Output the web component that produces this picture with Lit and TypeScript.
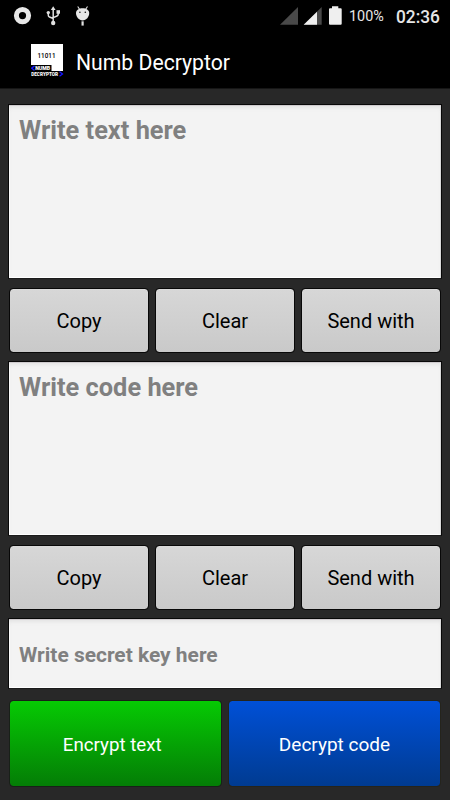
import { LitElement, html, css, svg } from "lit";
import { customElement, property } from "lit/decorators.js";

@customElement("status-bar")
class StatusBar extends LitElement {
  static styles = css`
    :host { display: flex; height: 35px; background: #000; color: #e6e6e6; }
    .icons { display: block; width: 110px; height: 35px; flex: none; }
    .signal { display: block; width: 74px; height: 35px; margin-left: 160px; flex: none; }
    .percent { font-size: 15px; line-height: 33px; width: 51.5px; padding-left: 5px; box-sizing: border-box; white-space: nowrap; }
    .percent span, .clock span { display: block; transform-origin: 0 50%; }
    .percent span { transform: scaleX(0.96); }
    .clock { font-size: 18px; line-height: 33px; font-weight: 500; white-space: nowrap; }
    .clock span { transform: scaleX(0.96); }
  `;
  render() {
    return html`
      <svg class="icons" viewBox="0 0 110 35">
        <circle cx="22.5" cy="15.6" r="6.1" fill="none" stroke="#e8e8e8" stroke-width="5" />
        <g fill="none" stroke="#e0e0e0" stroke-width="1.5">
          <path d="M53.2 9.5V22M48.3 13v2.200q0 1.300 1.200 1.800l3.700 1.500M58.200 12.500v1.800q0 1.200-1.200 1.700l-3.800 1.600" />
        </g>
        <g fill="#e0e0e0">
          <path d="M53.2 6.300l2.400 3.600h-4.800z" />
          <circle cx="53.200" cy="23" r="2.200" />
          <circle cx="48.300" cy="12.600" r="1.700" />
          <path d="M56.500 10.200H60v3.500h-3.500z" />
        </g>
        <path d="M77.700 6.500l2 3M87.500 6.500l-2 3" stroke="#e0e0e0" stroke-width="1.100" />
        <path d="M76 13C76 10 79 8.300 82.600 8.300S89.200 10 89.200 13C89.200 17 86.300 20.400 82.600 20.400S76 17 76 13Z" fill="#e6e6e6" />
        <path d="M81.500 21.300h2.200v4.300h-2.200z" fill="#e0e0e0" />
        <circle cx="79.900" cy="12.300" r=".8" fill="#111" />
        <circle cx="85.300" cy="12.300" r=".8" fill="#111" />
      </svg>
      <svg class="signal" viewBox="270 0 74 35">
        <path d="M298 7v17.7h-18z" fill="#494949" />
        <path d="M321.7 7v17.7h-18z" fill="#494949" />
        <path d="M317 11.7v13h-13.3z" fill="#efefef" />
        <path d="M332 6.2h6.3v2h2.4q1 0 1 1v14.5q0 1-1 1h-10.7q-1 0-1-1V9.200q0-1 1-1h2z" fill="#efefef" />
      </svg>
      <div class="percent"><span>100%</span></div>
      <div class="clock"><span>02:36</span></div>
    `;
  }
}

@customElement("title-bar")
class TitleBar extends LitElement {
  static styles = css`
    :host { display: flex; box-sizing: border-box; height: 54px; background: #000; border-bottom: 1px solid #161616; color: #fff; padding-left: 31px; }
    .logo { width: 34px; height: 34px; margin-top: 8px; flex: none; display: block; }
    .digits { font: 500 7.8px Roboto, sans-serif; }
    .mark { font: 900 5.600px Roboto, sans-serif; }
    .name { font-size: 21.500px; line-height: 56px; margin-left: 10.500px; white-space: nowrap; transform: scaleX(0.985); transform-origin: 0 50%; }
  `;
  render() {
    return html`
      <svg class="logo" viewBox="31 43 34 34">
        <path d="M31 44h32v27H51.500v-6H31z" fill="#fff" />
        ${svg`
          <text class="digits" x="37.500" y="57.700" textLength="18" lengthAdjust="spacingAndGlyphs" fill="#000">11011</text>
          <path d="M34.500 66l-2.800 2.200 2.800 2.200" fill="none" stroke="#1414ff" stroke-width="1.400" />
          <text class="mark" x="35.200" y="70.200" textLength="15" lengthAdjust="spacingAndGlyphs" fill="#fff">NUMB</text>
          <text class="mark" x="31.200" y="76" textLength="27" lengthAdjust="spacingAndGlyphs" fill="#fff">DECRYPTOR</text>
          <path d="M59.500 71.800l2.900 2.200-2.900 2.200" fill="none" stroke="#1414ff" stroke-width="1.400" />
        `}
      </svg>
      <div class="name">Numb Decryptor</div>
    `;
  }
}

@customElement("text-field")
class TextField extends LitElement {
  @property() hint = "";
  static styles = css`
    :host {
      display: block; box-sizing: border-box; border: 1px solid #080808; border-bottom-color: #1b1b1b;
      background: #f3f3f3; box-shadow: inset 0 1px 0 #cfcbce, inset 0 4px 5px -2px #dedede, inset 1px 0 0 #fff, inset -1px 0 0 #d8d8d8, inset 0 -1px 0 #fff;
      padding: 9px 0 0 10px; color: #808080; font-weight: 700; font-size: 25px; line-height: 34px; white-space: nowrap;
    }
    span { display: inline-block; transform: scaleX(1.015); transform-origin: 0 50%; }
    :host([small]) { padding-top: 18px; font-size: 21px; line-height: 36px; }
    :host([small]) span { transform: scaleX(0.997); }
  `;
  render() {
    return html`<span>${this.hint}</span>`;
  }
}

@customElement("push-button")
class PushButton extends LitElement {
  @property() label = "";
  static styles = css`
    :host {
      display: flex; align-items: center; justify-content: center; flex: 1; box-sizing: border-box;
      border: 1px solid #080808; border-radius: 4px; background: linear-gradient(#d7d7d7, #c9c9c9) padding-box;
      box-shadow: inset 0 1px 0 #dfdfdf55; color: #000; font-size: 20px; white-space: nowrap; padding-top: 1px;
    }
    :host([tone="green"]) { background-image: linear-gradient(#06ca03, #047d06); color: #fff; font-size: 19px; border-color: #182018; box-shadow: none; padding-right: 6px; }
    :host([tone="green"]) span { transform: scaleX(0.985); }
    :host([tone="blue"]) { background-image: linear-gradient(#0050d7, #003b91); color: #fff; font-size: 19px; border-color: #25241c; box-shadow: none; }
  `;
  render() {
    return html`<span>${this.label}</span>`;
  }
}

@customElement("app-root")
class AppRoot extends LitElement {
  static styles = css`
    :host {
      display: flex; flex-direction: column; width: 450px; height: 800px; overflow: hidden;
      background: #282828; font-family: Roboto, sans-serif;
    }
    .content { padding: 15px 8px 0; display: flex; flex-direction: column; }
    .box { height: 175px; }
    .key { height: 71px; }
    .row { display: flex; gap: 6px; height: 65px; margin: 9px 1px 8px; }
    .actions { display: grid; grid-template-columns: 1fr 1fr; gap: 6px; height: 87px; margin: 11px 1px 0; }
  `;
  private tools() {
    return html`<div class="row">
      ${["Copy", "Clear", "Send with"].map((t) => html`<push-button label=${t}></push-button>`)}
    </div>`;
  }
  render() {
    return html`
      <status-bar></status-bar>
      <title-bar></title-bar>
      <div class="content">
        <text-field class="box" hint="Write text here"></text-field>
        ${this.tools()}
        <text-field class="box" hint="Write code here"></text-field>
        ${this.tools()}
        <text-field class="key" small hint="Write secret key here"></text-field>
        <div class="actions">
          <push-button tone="green" label="Encrypt text"></push-button>
          <push-button tone="blue" label="Decrypt code"></push-button>
        </div>
      </div>
    `;
  }
}
